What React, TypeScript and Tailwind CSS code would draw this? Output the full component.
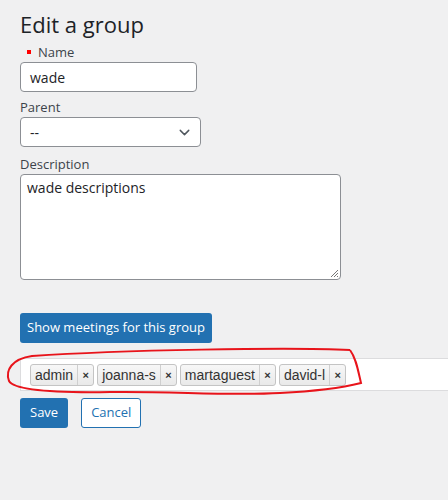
import { ChevronDown } from 'lucide-react';

const members = ['admin', 'joanna-s', 'martaguest', 'david-l'];

function Tag({ name }: { name: string }) {
  return (
    <span
      className="flex h-[22px] items-stretch rounded-[3px] border border-[#c4c4c4] bg-gradient-to-b from-[#f7f7f7] to-[#e9e9e9] text-[14px] leading-[20px] text-[#333]"
      style={{ fontFamily: '"Liberation Sans", Arial, sans-serif' }}
    >
      <span className="px-[4px]">{name}</span>
      <span className="flex w-[16px] items-center justify-center border-l border-[#cfcfcf] text-[11px] font-bold text-[#333]">
        ×
      </span>
    </span>
  );
}

export default function App() {
  return (
    <div
      className="relative h-[500px] w-[448px] overflow-hidden bg-[#f0f0f1] text-[#1d2327]"
      style={{ fontFamily: '"Open Sans", "Noto Sans", sans-serif' }}
    >
      <div className="pl-[20px] pt-[8px]">
        <h1 className="text-[22px] leading-[32px] font-normal">Edit a group</h1>

        <label className="mt-[3px] flex items-center text-[13px] leading-[18px] text-[#3c434a]">
          <span className="ml-[7px] mr-[7px] h-[4px] w-[4px] bg-[#ff0000]" />
          Name
        </label>
        <div className="mt-[1px] flex h-[30px] w-[177px] items-center rounded-[4px] border border-[#8c8f94] bg-white px-[9px] text-[14px]">
          wade
        </div>

        <label className="mt-[6px] block text-[13px] leading-[18px] text-[#3c434a]">Parent</label>
        <div className="mt-[1px] flex h-[30px] w-[181px] items-center justify-between rounded-[4px] border border-[#8c8f94] bg-white pl-[9px] pr-[7px] text-[14px]">
          <span>--</span>
          <ChevronDown size={17} strokeWidth={2} className="text-[#50575e]" />
        </div>

        <label className="mt-[8px] block text-[13px] leading-[18px] text-[#3c434a]">Description</label>
        <div className="relative mt-[1px] h-[106px] w-[321px] rounded-[4px] border border-[#8c8f94] bg-white px-[6px] py-[2px] text-[14px] leading-[22px]">
          wade descriptions
          <svg className="absolute bottom-[1px] right-[1px]" width="9" height="9" viewBox="0 0 9 9">
            <path d="M8 1 L1 8 M8 4 L4 8 M8 7 L7 8" stroke="#777" strokeWidth="1" />
          </svg>
        </div>

        <button className="mt-[33px] flex h-[30px] items-center rounded-[3px] bg-[#2271b1] px-[7px] text-[13px] text-white">
          Show meetings for this group
        </button>

        <div className="mt-[15px] flex h-[33px] w-[440px] items-center gap-[3px] border border-[#dcdcde] bg-white pl-[9px]">
          {members.map((m) => (
            <Tag key={m} name={m} />
          ))}
        </div>

        <div className="mt-[7px] flex gap-[13px]">
          <button className="flex h-[30px] items-center rounded-[3px] bg-[#2271b1] px-[10px] text-[13px] text-white">
            Save
          </button>
          <button className="flex h-[30px] items-center rounded-[3px] border border-[#2271b1] bg-white px-[9px] text-[13px] text-[#2271b1]">
            Cancel
          </button>
        </div>
      </div>

      {/* hand-drawn red loop around the member tags */}
      <svg className="pointer-events-none absolute left-0 top-0" width="448" height="500">
        <path
          d="M350 350 C 290 347, 120 350, 32 356 C 12 359, 5 370, 9 381 C 14 390, 50 393, 110 392 C 170 391, 230 396, 280 393 C 320 391, 345 387, 361 383 C 358 370, 356 358, 350 350"
          fill="none"
          stroke="#e8141b"
          strokeWidth="2"
        />
      </svg>
    </div>
  );
}
